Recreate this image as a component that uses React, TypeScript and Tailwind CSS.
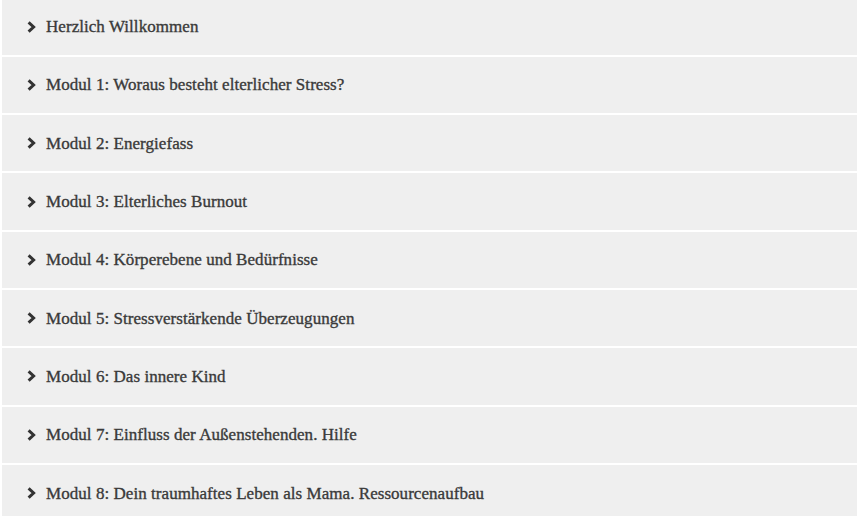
import React from "react";

const items = [
  "Herzlich Willkommen",
  "Modul 1: Woraus besteht elterlicher Stress?",
  "Modul 2: Energiefass",
  "Modul 3: Elterliches Burnout",
  "Modul 4: Körperebene und Bedürfnisse",
  "Modul 5: Stressverstärkende Überzeugungen",
  "Modul 6: Das innere Kind",
  "Modul 7: Einfluss der Außenstehenden. Hilfe",
  "Modul 8: Dein traumhaftes Leben als Mama. Ressourcenaufbau",
];

function Chevron() {
  return (
    <svg width="9" height="12" viewBox="0 0 9 12" className="shrink-0">
      <path d="M1.6 1.4 L6.6 6 L1.6 10.6" fill="none" stroke="#333333" strokeWidth="3" strokeLinejoin="miter" />
    </svg>
  );
}

export default function App() {
  return (
    <div className="w-[857px] h-[516px] overflow-hidden bg-white pl-[2px]">
      <div className="flex flex-col gap-[2px] -mt-[1.5px]">
        {items.map((t) => (
          <div key={t} className="h-[56.3px] bg-[#efefef] flex items-center pl-[25px]">
            <Chevron />
            <span
              className="ml-[10px] text-[17px] tracking-[0.05px] text-[#3a3a3a] leading-none [-webkit-text-stroke:0.35px_#3a3a3a]"
              style={{ fontFamily: '"Liberation Serif", serif' }}
            >
              {t}
            </span>
          </div>
        ))}
      </div>
    </div>
  );
}
